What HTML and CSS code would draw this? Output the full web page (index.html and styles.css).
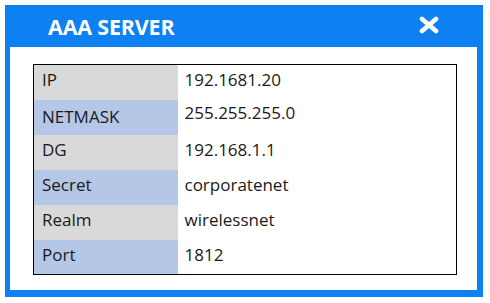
FILE: index.html
```html
<!DOCTYPE html>
<html lang="en">
<head>
    <meta charset="UTF-8">
    <title>AAA Server</title>
    <link rel="stylesheet" href="styles.css">
</head>
<body>
    <div class="dialog">
        <div class="dialog-header">
            <h1>AAA SERVER</h1>
            <svg class="close" width="22" height="18" viewBox="0 0 22 18">
                <path d="M4 3 L18 15 M18 3 L4 15" stroke="#fff" stroke-width="4.6" stroke-linecap="round"/>
            </svg>
        </div>
        <div class="dialog-body">
            <table class="server-table">
                <tr class="gray"><th>IP</th><td>192.1681.20</td></tr>
                <tr class="blue"><th class="low">NETMASK</th><td class="high">255.255.255.0</td></tr>
                <tr class="gray"><th>DG</th><td>192.168.1.1</td></tr>
                <tr class="blue"><th>Secret</th><td>corporatenet</td></tr>
                <tr class="gray"><th>Realm</th><td>wirelessnet</td></tr>
                <tr class="blue"><th>Port</th><td>1812</td></tr>
            </table>
        </div>
    </div>
</body>
</html>
```

FILE: styles.css
```css
body {
    margin: 0;
    background: #fff;
    font-family: "Open Sans", Arial, sans-serif;
    color: #1a1a1a;
}
.dialog {
    margin: 5px 7px 6px 5px;
    height: 292px;
    background: #0d80f2;
    display: flex;
    flex-direction: column;
    box-sizing: border-box;
    padding: 0 6px 7px 5px;
}
.dialog-header {
    height: 42px;
    display: flex;
    align-items: center;
    justify-content: space-between;
    padding: 0 37px 0 38px;
    flex-shrink: 0;
}
.dialog-header h1 {
    margin: 0;
    color: #fff;
    font-size: 21.5px;
    font-weight: bold;
    letter-spacing: -0.2px;
}
.close {
    display: block;
    margin-top: -3px;
}
.dialog-body {
    flex: 1;
    background: #fff;
    padding: 17px 20px 0 23px;
}
.server-table {
    width: 424px;
    border: 1px solid #000;
    border-collapse: collapse;
    font-size: 17px;
}
.server-table th,
.server-table td {
    height: 35px;
    padding: 4px 0 0 8px;
    text-align: left;
    vertical-align: top;
    font-weight: normal;
    box-sizing: border-box;
    line-height: 22px;
}
.server-table th {
    width: 144px;
}
.server-table td {
    padding-left: 7px;
    background: #fff;
}
.server-table .low {
    padding-top: 6px;
}
.server-table .high {
    padding-top: 2px;
}
.gray th {
    background: #d9d9d9;
}
.blue th {
    background: #b4c7e7;
}
```
